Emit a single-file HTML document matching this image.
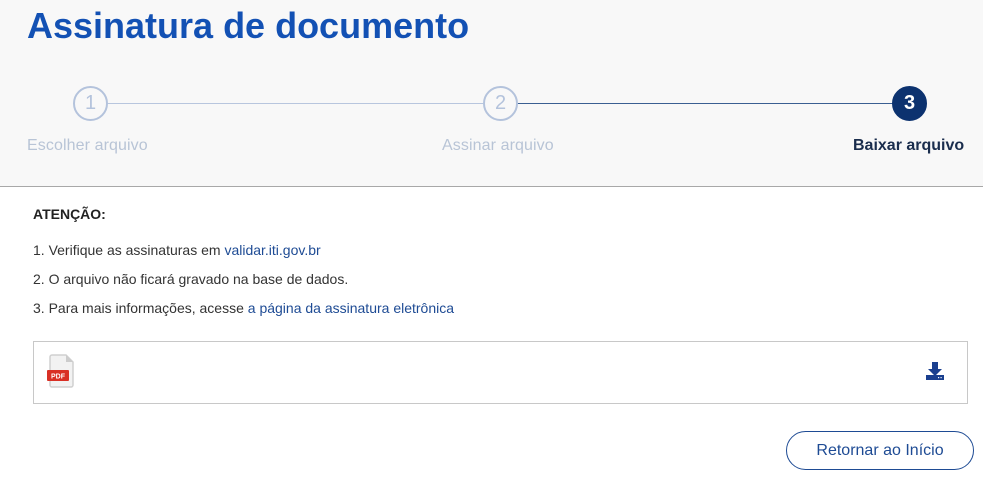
<!DOCTYPE html>
<html><head><meta charset="utf-8"><style>
*{margin:0;padding:0;box-sizing:border-box}
body{width:983px;height:478px;background:#fff;font-family:"Liberation Sans",sans-serif;position:relative;overflow:hidden;color:#333}
.hdr{position:absolute;left:0;top:0;width:983px;height:187px;background:#f8f8f8;border-bottom:1px solid #a8a8a8}
h1{position:absolute;left:27px;top:5px;font-size:36px;font-weight:bold;color:#1351b4;letter-spacing:0}
.c{position:absolute;width:35px;height:35px;border-radius:50%;border:2px solid #b4c3dc;background:#f8f8f8;color:#b4c3dc;font-size:20px;text-align:center;line-height:31px;top:86px}
.l{position:absolute;top:137px;font-size:16px;color:#b8c4d6;letter-spacing:0.1px}
.line{position:absolute;height:1px;top:103px}
.t{position:absolute;font-size:14px;color:#333}
a{color:#1e4b94;text-decoration:none}
</style></head><body>
<div class="hdr">
<h1>Assinatura de documento</h1>
<div class="line" style="left:107px;width:376px;background:#b8c6de"></div>
<div class="line" style="left:517px;width:376px;background:#3a5f92"></div>
<div class="c" style="left:73px">1</div>
<div class="c" style="left:483px">2</div>
<div class="c" style="left:892px;background:#0c326f;border-color:#0c326f;color:#fff;font-weight:bold">3</div>
<div class="l" style="left:27px">Escolher arquivo</div>
<div class="l" style="left:442px">Assinar arquivo</div>
<div class="l" style="left:853px;color:#1a2d4d;font-weight:bold;font-size:16px;letter-spacing:0">Baixar arquivo</div>
</div>
<div class="t" style="left:33px;top:206px;font-weight:bold;color:#222">ATENÇÃO:</div>
<div class="t" style="left:33px;top:242px">1. Verifique as assinaturas em <a>validar.iti.gov.br</a></div>
<div class="t" style="left:33px;top:271px">2. O arquivo não ficará gravado na base de dados.</div>
<div class="t" style="left:33px;top:300px">3. Para mais informações, acesse <a>a página da assinatura eletrônica</a></div>
<div style="position:absolute;left:33px;top:341px;width:935px;height:63px;border:1px solid #c8c8c8"></div>
<svg style="position:absolute;left:46px;top:354px" width="30" height="34" viewBox="0 0 30 34">
<path d="M6 1h14l7 7v23a2 2 0 0 1-2 2H6a2 2 0 0 1-2-2V3a2 2 0 0 1 2-2z" fill="#f2f2f2" stroke="#d0d0d0" stroke-width="1.5"/>
<path d="M20 1v7h7" fill="#ccc"/>
<rect x="1" y="16" width="22" height="11" rx="1" fill="#d93025"/>
<text x="12" y="24.5" font-size="7" font-weight="bold" fill="#fff" text-anchor="middle" font-family="Liberation Sans">PDF</text>
</svg>
<svg style="position:absolute;left:925px;top:361px" width="20" height="20" viewBox="0 0 20 20">
<path d="M7 1h6v7h4l-7 7-7-7h4z" fill="#1a3f8f"/>
<rect x="1" y="14" width="18" height="5" fill="#1a3f8f"/>
<rect x="13" y="16" width="1.2" height="1.2" fill="#fff"/><rect x="15.5" y="16" width="1.2" height="1.2" fill="#fff"/>
</svg>
<div style="position:absolute;left:786px;top:431px;width:188px;height:39px;border:1px solid #1e4b94;border-radius:20px;color:#1e4b94;font-size:16px;text-align:center;line-height:37px">Retornar ao Início</div>
</body></html>
